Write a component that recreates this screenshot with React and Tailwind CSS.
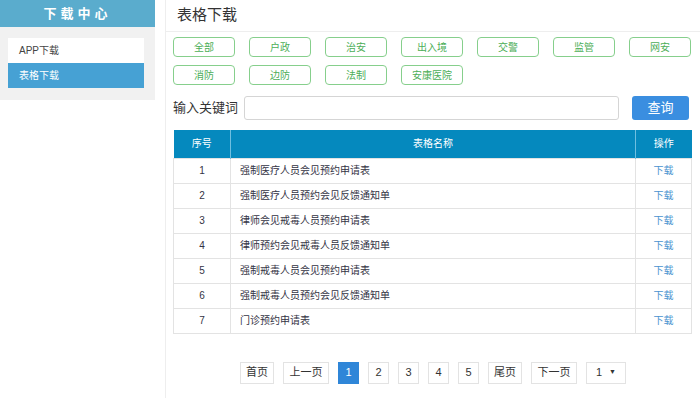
import React, { useState } from 'react'

const categories = ['全部', '户政', '治安', '出入境', '交警', '监管', '网安', '消防', '边防', '法制', '安康医院']

const forms = [
  '强制医疗人员会见预约申请表',
  '强制医疗人员预约会见反馈通知单',
  '律师会见戒毒人员预约申请表',
  '律师预约会见戒毒人员反馈通知单',
  '强制戒毒人员会见预约申请表',
  '强制戒毒人员预约会见反馈通知单',
  '门诊预约申请表',
]

const pages = ['首页', '上一页', '1', '2', '3', '4', '5', '尾页', '下一页']

export default function App() {
  const [active, setActive] = useState('表格下载')
  const [page, setPage] = useState('1')

  return (
    <div
      className="flex h-[398px] w-[700px] overflow-hidden bg-white text-[#333]"
      style={{ fontFamily: '"Liberation Sans", "Noto Sans CJK SC", sans-serif' }}
    >
      {/* sidebar */}
      <aside className="w-[155px] shrink-0">
        <div className="flex h-[27px] items-center justify-center bg-[#5aaccd] text-[13px] font-bold tracking-[4px] text-white">
          下载中心
        </div>
        <div className="bg-[#f1f1f1] pb-[12px] pl-[8px] pr-[11px] pt-[11px]">
          {['APP下载', '表格下载'].map(item => (
            <button
              key={item}
              type="button"
              onClick={() => setActive(item)}
              className={`block h-[25px] w-full px-[11px] text-left text-[10px] ${
                active === item ? 'bg-[#46a1d4] text-white' : 'bg-white text-[#444]'
              }`}
            >
              {item}
            </button>
          ))}
        </div>
      </aside>

      {/* main */}
      <main className="ml-[10px] flex-1 border-l border-[#eeeeee]">
        <div className="flex h-[32px] items-center border-b border-[#eeeeee] pl-[11px] text-[15px] text-[#333]">
          表格下载
        </div>

        <div className="px-[7px]">
          <div className="mt-[5px] flex flex-wrap gap-x-[14px] gap-y-[8px]">
            {categories.map(c => (
              <button
                key={c}
                type="button"
                className="flex h-[20px] w-[62px] items-center justify-center rounded-[4px] border border-[#86cf8c] text-[10px] text-[#4cae57]"
              >
                {c}
              </button>
            ))}
          </div>

          <div className="mt-[11px] flex h-[24px] items-center">
            <span className="w-[71px] text-[13px] text-[#333]">输入关键词</span>
            <input className="h-[24px] w-[375px] rounded-[3px] border border-[#d5d5d5] bg-white outline-none" />
            <button
              type="button"
              className="ml-[13px] h-[24px] w-[57px] rounded-[3px] bg-[#3a8ee0] text-[13px] text-white"
            >
              查询
            </button>
          </div>

          <table className="mt-[10px] w-[519px] border-collapse text-[10px]">
            <thead>
              <tr className="h-[28px] bg-[#0589be] text-white">
                <th className="w-[57px] border-r border-[#6fbfe0] font-normal">序号</th>
                <th className="border-r border-[#6fbfe0] font-normal">表格名称</th>
                <th className="w-[56px] font-normal">操作</th>
              </tr>
            </thead>
            <tbody>
              {forms.map((f, i) => (
                <tr key={f} className="h-[25px]">
                  <td className="border border-[#e3e3e3] text-center text-[#334]">{i + 1}</td>
                  <td className="border border-[#e3e3e3] pl-[9px] text-[#334]">{f}</td>
                  <td className="border border-[#e3e3e3] text-center text-[#4a92cf]">下载</td>
                </tr>
              ))}
            </tbody>
          </table>

          <div className="mt-[28px] flex items-center pl-[67px]">
            {pages.map(p => {
              const isNum = /^\d$/.test(p)
              const on = page === p
              return (
                <button
                  key={p}
                  type="button"
                  onClick={() => isNum && setPage(p)}
                  className={`mr-[9px] h-[22px] border text-[11px] ${
                    isNum ? 'w-[21px]' : p.length === 2 ? 'w-[34px]' : 'w-[46px]'
                  } ${
                    on ? 'border-[#2f86d8] bg-[#2f86d8] text-white' : 'border-[#e3e3e3] bg-white text-[#333]'
                  }`}
                >
                  {p}
                </button>
              )
            })}
            <div className="flex h-[22px] w-[40px] items-center justify-between border border-[#e3e3e3] px-[9px] text-[11px] text-[#333]">
              <span>1</span>
              <span className="text-[7px]">▼</span>
            </div>
          </div>
        </div>
      </main>
    </div>
  )
}
